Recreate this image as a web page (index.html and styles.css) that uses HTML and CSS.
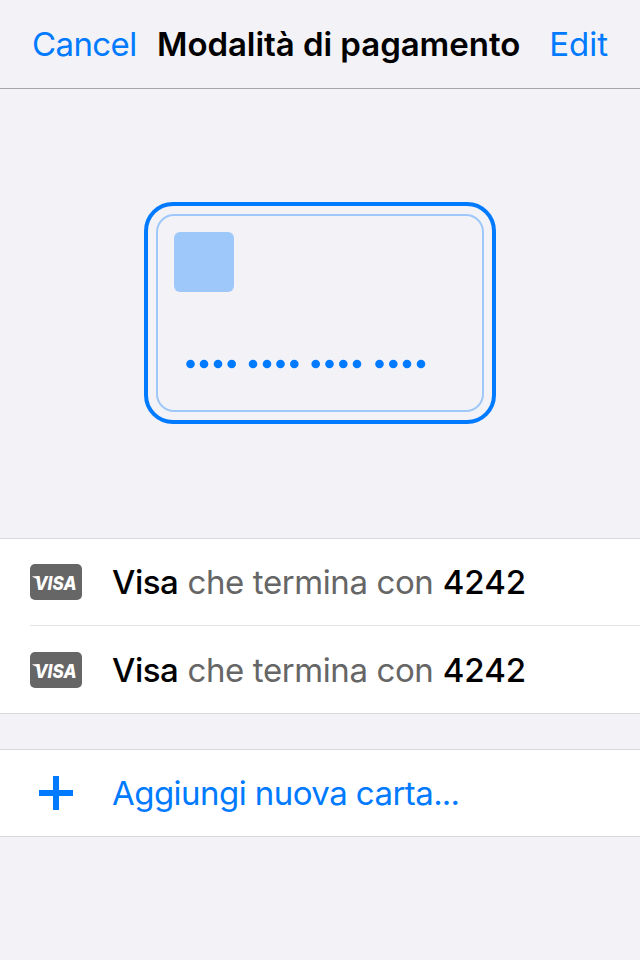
FILE: index.html
```html
<!DOCTYPE html>
<html lang="it">
<head>
<meta charset="utf-8">
<title>Modalità di pagamento</title>
<link rel="stylesheet" href="styles.css">
</head>
<body>
<header class="navbar">
  <a class="nav-action cancel">Cancel</a>
  <h1 class="title">Modalità di pagamento</h1>
  <a class="nav-action edit">Edit</a>
</header>
<main>
  <section class="hero">
    <svg class="card" viewBox="0 0 352 222">
      <rect x="2" y="2" width="348" height="218" rx="27" fill="none" stroke="#007aff" stroke-width="4"/>
      <rect x="13" y="13" width="326" height="196" rx="17" fill="none" stroke="#9fc8fa" stroke-width="2"/>
      <rect x="30" y="30" width="60" height="60" rx="6" fill="#9fc8fa"/>
      <g fill="#007aff">
        <circle cx="46.5" cy="162" r="4.3"/><circle cx="60" cy="162" r="4.3"/><circle cx="74" cy="162" r="4.3"/><circle cx="87.7" cy="162" r="4.3"/>
        <circle cx="109" cy="162" r="4.3"/><circle cx="123" cy="162" r="4.3"/><circle cx="136.5" cy="162" r="4.3"/><circle cx="150.3" cy="162" r="4.3"/>
        <circle cx="171.7" cy="162" r="4.3"/><circle cx="185.5" cy="162" r="4.3"/><circle cx="199.3" cy="162" r="4.3"/><circle cx="213" cy="162" r="4.3"/>
        <circle cx="235.5" cy="162" r="4.3"/><circle cx="249.3" cy="162" r="4.3"/><circle cx="263" cy="162" r="4.3"/><circle cx="277" cy="162" r="4.3"/>
      </g>
    </svg>
  </section>
  <section class="group">
    <div class="row saved">
      <svg class="brand" viewBox="0 0 52 36">
        <rect width="52" height="36" rx="5" fill="#666"/>
        <text class="brand-name" x="4.5" y="25.8" textLength="42" lengthAdjust="spacingAndGlyphs">VISA</text>
        <path d="M2.5 12.3H7Q9 12.5 9.5 14.5L10 19Q8 14.5 2.5 13Z" fill="#fff"/>
      </svg>
      <span class="label"><b class="name">Visa</b> <span class="muted">che termina con</span> <b>4242</b></span>
    </div>
    <div class="row saved">
      <svg class="brand" viewBox="0 0 52 36">
        <rect width="52" height="36" rx="5" fill="#666"/>
        <text class="brand-name" x="4.5" y="25.8" textLength="42" lengthAdjust="spacingAndGlyphs">VISA</text>
        <path d="M2.5 12.3H7Q9 12.5 9.5 14.5L10 19Q8 14.5 2.5 13Z" fill="#fff"/>
      </svg>
      <span class="label"><b class="name">Visa</b> <span class="muted">che termina con</span> <b>4242</b></span>
    </div>
  </section>
  <section class="group add-group">
    <div class="row">
      <svg class="plus" viewBox="0 0 52 36"><path d="M9 18H43M26 1V35" stroke="#007aff" stroke-width="6"/></svg>
      <span class="label add">Aggiungi nuova carta<span class="dots">...</span></span>
    </div>
  </section>
</main>
</body>
</html>
```
FILE: styles.css
```css
* { box-sizing: border-box; }
body { margin: 0; background: #f2f2f7; font-family: Inter, sans-serif; font-size: 33px; color: #000; }
.navbar { height: 89px; padding: 0 32px; border-bottom: 1px solid #a7a7aa; display: flex; align-items: center; white-space: nowrap; }
.nav-action { color: #007aff; }
.cancel { width: 125px; letter-spacing: -0.6px; }
.title { margin: 0; font-size: 33px; font-weight: 600; letter-spacing: -0.05px; }
.edit { margin-left: auto; }
.hero { height: 449px; padding-top: 113px; display: flex; justify-content: center; }
.card { width: 352px; height: 222px; }
.group { background: #fff; border-top: 1px solid #d9d9dc; border-bottom: 1px solid #d9d9dc; }
.row { height: 86px; padding-left: 30px; display: flex; align-items: center; gap: 30px; white-space: nowrap; }
.saved + .saved { height: 88px; padding-top: 2px; background: linear-gradient(#e4e4e6, #e4e4e6) 30px 0 / 100% 1px no-repeat; }
.add-group { margin-top: 35px; }
.brand { width: 52px; height: 36px; }
.brand-name { font-family: Inter, sans-serif; font-size: 18.5px; font-weight: 800; font-style: italic; fill: #fff; }
.plus { width: 52px; height: 36px; }
.label b { font-weight: 500; }
.label .name { letter-spacing: -0.5px; }
.muted { color: #666; letter-spacing: -0.4px; }
.add { color: #007aff; letter-spacing: -0.55px; }
.dots { letter-spacing: -0.9px; }
```
